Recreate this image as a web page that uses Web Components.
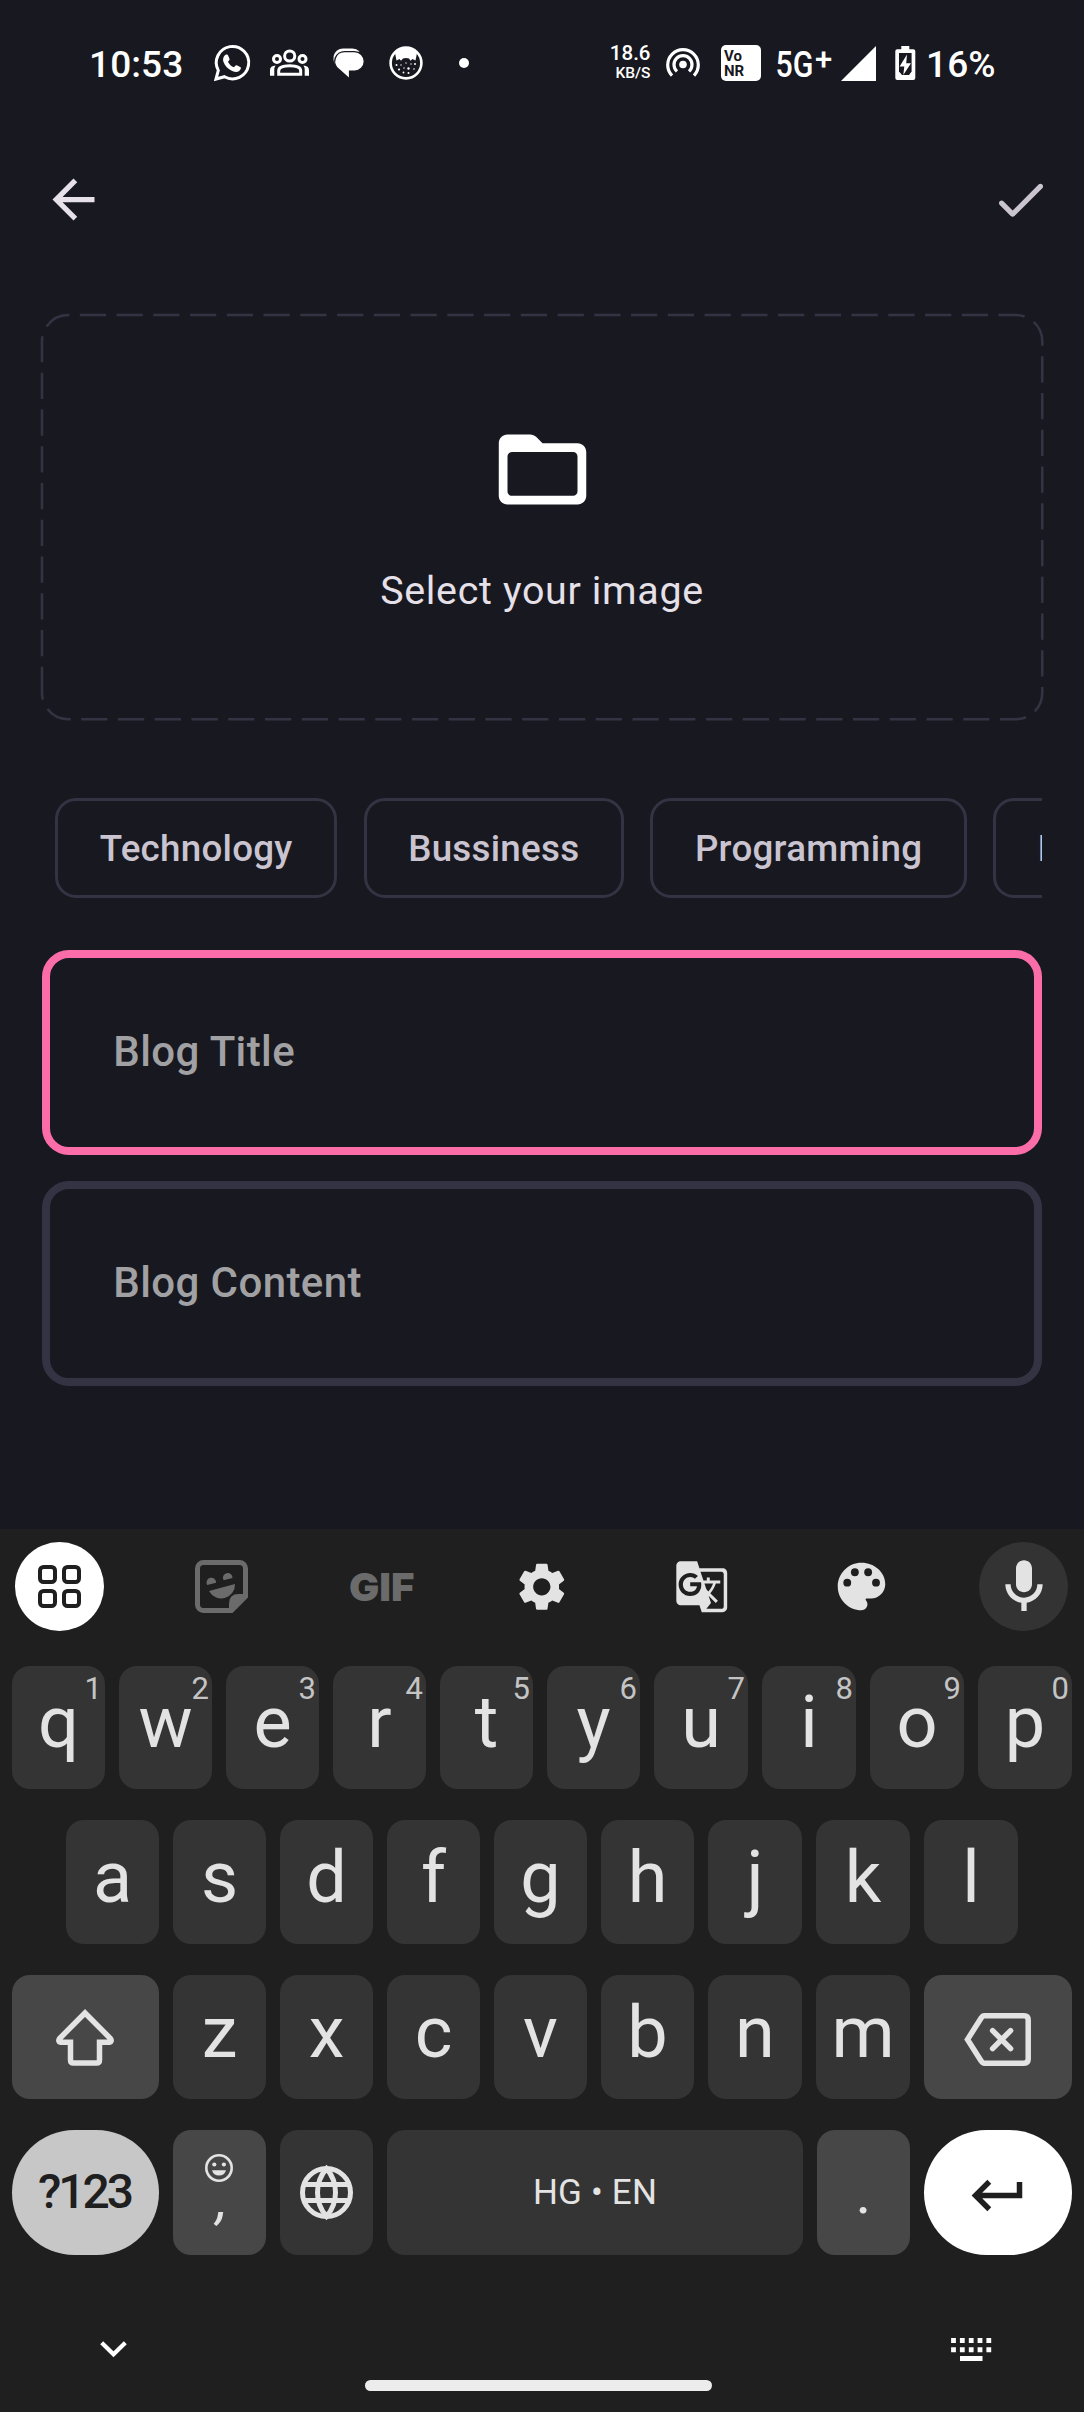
<!DOCTYPE html>
<html lang="en">
<head>
<meta charset="utf-8">
<title>New blog</title>
<style>
html,body{margin:0;padding:0}
body{width:1084px;height:2412px;overflow:hidden;background:#181820;font-family:Roboto,"Noto Sans",sans-serif}
</style>
</head>
<body>
<blog-screen></blog-screen>
<script>
const ICONS = {
  whatsapp:[36,36,'0 0 36 36','<path d="M2 34l2.300-8.600A16.200 16.200 0 1 1 10.500 31.700z" fill="none" stroke="#fff" stroke-width="3" stroke-linejoin="miter"/><path d="M12 9.600c.8-.4 1.700-.2 2 .6l1.500 3.500c.3.700 0 1.300-1.600 3 1.400 2.700 3.400 4.500 6.100 5.600 1.600-2 2-2.300 2.700-2l3.500 1.700c.8.400.8 1.100.5 2-1.700 3.500-4.800 3.600-8.500 1.900-4.300-2-7.300-5.300-8.700-9-1-3 .2-6.100 2.500-7.300z" fill="#fff"/>'],
  people:[39,28,'0 0 39 28','<g fill="none" stroke="#fff" stroke-width="3"><circle cx="19.700" cy="7" r="5.100"/><circle cx="7" cy="10" r="3.500"/><circle cx="32.500" cy="10" r="3.500"/><path d="M8.700 25.200v-3.300c0-3.600 5.500-5.100 11-5.100s11 1.500 11 5.100v3.300z"/></g><path d="M0 26.700v-5.500c0-3 2-4.500 5.500-4.700q-1.200 2-1.200 4v6.200zM39 26.700v-5.500c0-3-2-4.500-5.500-4.700q1.200 2 1.200 4v6.200z" fill="#fff"/>'],
  chat:[31,31,'0 0 31 31','<path d="M1.500 15.500Q-1.500 7 4 2.500 6.500.5 10 .5h9.500q4 0 7 3z" fill="#fff"/><path d="M12 3.600h9.500a9.800 9.800 0 0 1 0 19.600H16.600V31L6 21.500A9.800 9.800 0 0 1 12 3.600z" fill="#fff" stroke="#181820" stroke-width="1.400"/>'],
  cat:[34,34,'0 0 34 34','<circle cx="17" cy="17" r="15.400" fill="none" stroke="#fff" stroke-width="2.600"/><path d="M6 7Q10 1 17 1t11 6l-1.500 7.500-3-1.500-2 1.800-1.500-2.300q-3-.8-6 0L12 14.800 10.500 13l-3 1.500z" fill="#fff"/><g fill="#fff"><circle cx="7.500" cy="19" r="1"/><circle cx="26" cy="18" r="1"/><circle cx="17" cy="17" r=".7"/><circle cx="10" cy="23.500" r="1.100"/><circle cx="19.500" cy="22.500" r="1.200"/><circle cx="25" cy="23" r=".8"/><circle cx="14.500" cy="26.500" r=".9"/><circle cx="12" cy="19" r=".7"/><circle cx="22" cy="18" r=".7"/><circle cx="19.500" cy="27" r="1"/><circle cx="15" cy="22" r=".7"/></g>'],
  dot:[10,10,'0 0 10 10','<circle cx="5" cy="5" r="5" fill="#fff"/>'],
  hotspot:[34,30,'0 0 34 30','<circle cx="17" cy="16.500" r="3.800" fill="#fff"/><g fill="none" stroke="#fff" stroke-width="3.200"><path d="M6 27.600A15.300 15.300 0 1 1 28 27.600"/><path d="M11 23.400A9 9 0 1 1 23 23.400"/></g>'],
  vonr:[40,36,'0 0 40 36','<rect width="40" height="36" rx="5" fill="#fff"/><g fill="#181820" font-family="Roboto,sans-serif" font-weight="700" font-size="15"><text x="3" y="15.500">Vo</text><text x="3" y="30.700">NR</text></g>'],
  fiveg:[57,36,'0 0 57 36','<g fill="#fff" font-family="Roboto,sans-serif" font-weight="500"><text transform="translate(-.5 31.500) scale(.82 1)" font-size="37">5G</text><text x="39" y="24.700" font-size="31">+</text></g>'],
  signal:[35,35,'0 0 35 35','<path d="M35 0v35H0z" fill="#fff"/>'],
  battery:[20.500,34,'0 0 20.500 34','<path d="M6.300 0h8v3.200h4a2 2 0 0 1 2 2V32a2 2 0 0 1-2 2h-16a2 2 0 0 1-2-2V5.200a2 2 0 0 1 2-2h4z" fill="#fff"/><path d="M4 7h12.600v18.500L14 29H7l-3-3.500z" fill="#181820"/><path d="M12 8.500L4.600 20.500h4.700L8.300 29 16 17.300h-4.800z" fill="#fff"/>'],
  back:[63,63,'0 0 24 24','<path fill="#e6e0e9" d="M20 11H7.830l5.590-5.590L12 4l-8 8 8 8 1.410-1.410L7.830 13H20z"/>'],
  done:[63,63,'0 0 24 24','<path fill="#cac4d0" d="M9 16.200l-3.500-3.500c-.39-.39-1.010-.39-1.400 0-.39.390-.39 1.010 0 1.400l4.190 4.190c.39.390 1.020.390 1.410 0L20.300 7.700c.39-.39.390-1.010 0-1.400-.39-.39-1.010-.39-1.400 0z"/>'],
  folder:[105,105,'0 0 24 24','<path fill="#fff" d="M20 6h-8l-1.410-1.410C10.210 4.210 9.700 4 9.170 4H4c-1.100 0-1.990.9-1.990 2L2 18c0 1.100.9 2 2 2h16c1.100 0 2-.9 2-2V8c0-1.100-.9-2-2-2zm-1 12H5c-.55 0-1-.45-1-1V9c0-.55.450-1 1-1h14c.55 0 1 .45 1 1v8c0 .55-.45 1-1 1z"/>'],
  apps:[43,43,'0 0 43 43','<g fill="none" stroke="#1f1f1f" stroke-width="4"><rect x="2" y="2" width="15" height="15" rx="3.500"/><rect x="26" y="2" width="15" height="15" rx="3.500"/><rect x="2" y="26" width="15" height="15" rx="3.500"/><rect x="26" y="26" width="15" height="15" rx="3.500"/></g>'],
  sticker:[53,53,'0 0 53 53','<path d="M8.500 2.500h36a6 6 0 0 1 6 6V36.500L36.500 50.500h-28a6 6 0 0 1-6-6v-36a6 6 0 0 1 6-6z" fill="none" stroke="#6b6b6b" stroke-width="5"/><path d="M34 50v-6.500q0-9.500 9.500-9.500H51v3.500L37 52z" fill="#6b6b6b"/><path d="M12.200 25a4.800 4.800 0 1 1 8.900-2.300zM28.600 20.300a4.800 4.800 0 1 1 8.900-2.300zM14 31l26-7A13.800 13.800 0 0 1 14 31z" fill="#6b6b6b"/>'],
  gif:[64,30,'0 0 64 30','<text x="-1" y="29" font-family="Inter,sans-serif" font-weight="900" font-size="39" textLength="65.500" lengthAdjust="spacingAndGlyphs" fill="#6b6b6b">GIF</text>'],
  gear:[57.600,57.600,'0 0 24 24','<path fill="#e3e3e3" d="M19.140 12.940c.04-.3.060-.61.060-.94 0-.32-.02-.64-.07-.94l2.030-1.580c.18-.14.230-.41.120-.61l-1.920-3.320c-.12-.22-.37-.29-.59-.22l-2.390.96c-.5-.38-1.030-.7-1.620-.94l-.36-2.540c-.04-.24-.24-.41-.48-.41h-3.840c-.24 0-.43.170-.47.410l-.36 2.540c-.59.240-1.130.570-1.620.940l-2.390-.96c-.22-.08-.47 0-.59.220L2.740 8.870c-.12.210-.08.470.12.610l2.030 1.580c-.05.300-.09.630-.09.940s.02.640.07.940l-2.030 1.580c-.18.140-.23.410-.12.610l1.920 3.320c.12.220.370.290.590.220l2.390-.96c.5.380 1.030.7 1.620.94l.36 2.540c.05.240.240.410.480.410h3.840c.24 0 .44-.17.470-.41l.36-2.540c.59-.24 1.130-.56 1.620-.94l2.390.96c.22.080.470 0 .59-.22l1.920-3.320c.12-.22.070-.47-.12-.61zM12 15.600c-1.980 0-3.600-1.620-3.600-3.600s1.620-3.600 3.600-3.600 3.600 1.620 3.600 3.600-1.620 3.600-3.600 3.600z"/>'],
  translate:[55.500,55.500,'0 0 24 24','<path fill="#e3e3e3" d="M21 4H11l-1-3H3c-1.100 0-2 .9-2 2v15c0 1.100.9 2 2 2h8l1 3h9c1.100 0 2-.9 2-2V6c0-1.100-.9-2-2-2zM7 16c-2.760 0-5-2.240-5-5s2.240-5 5-5c1.350 0 2.480.5 3.350 1.300L9.030 8.570c-.38-.36-1.040-.78-2.030-.78-1.740 0-3.150 1.440-3.150 3.210S5.260 14.210 7 14.210c2.010 0 2.840-1.440 2.920-2.410H7v-1.710h4.680c.07.310.12.610.12 1.020C11.800 13.970 9.890 16 7 16zm6.170-5.420h3.700c-.43 1.250-1.110 2.430-2.050 3.470-.31-.35-.6-.72-.86-1.100l-.79-2.370zm8.330 9.920c0 .55-.45 1-1 1H14l2-2.500-1.040-3.100 3.100 3.100.92-.92-3.300-3.250.02-.02c1.130-1.250 1.930-2.690 2.400-4.220H20v-1.300h-4.530V8h-1.290v1.290h-1.440L11.460 5.500h9.040c.55 0 1 .45 1 1v14z"/>'],
  palette:[57,57,'0 0 24 24','<path fill="#e3e3e3" d="M12 2C6.490 2 2 6.490 2 12s4.490 10 10 10c1.380 0 2.500-1.120 2.500-2.500 0-.61-.23-1.200-.64-1.670-.08-.1-.13-.21-.13-.33 0-.28.220-.5.500-.5H16c3.310 0 6-2.690 6-6 0-4.960-4.490-9-10-9z"/><g fill="#1f1f1f"><circle cx="6" cy="10.400" r="1.650"/><circle cx="9.200" cy="6" r="1.650"/><circle cx="14.800" cy="6" r="1.650"/><circle cx="18.100" cy="10.400" r="1.650"/></g>'],
  mic:[64,64,'0 0 24 24','<path fill="#e3e3e3" d="M12 14c1.660 0 3-1.340 3-3V5c0-1.660-1.340-3-3-3S9 3.340 9 5v6c0 1.660 1.340 3 3 3zm5-3c0 2.760-2.240 5-5 5s-5-2.240-5-5H5c0 3.530 2.610 6.430 6 6.920V21h2v-3.080c3.390-.49 6-3.390 6-6.920z"/>'],
  shift:[60,57,'0 0 60 57','<path d="M30 4L4.600 29.500q-2 3 1 3.700H15.500V51q0 3 3 3H41.500q3 0 3-3V33.200H54.400q3-.7 1-3.700z" fill="none" stroke="#e3e3e3" stroke-width="5.500"/>'],
  backspace:[67,53,'0 0 67 53','<path d="M20.500 2.800H60q4.200 0 4.200 4.200v39q0 4.200-4.200 4.200H20.500q-2 0-3.200-2L3.500 26.500 17.300 4.800q1.200-2 3.200-2z" fill="none" stroke="#e3e3e3" stroke-width="5.500"/><path d="M28.600 17.600l18 18m0-18l-18 18" stroke="#e3e3e3" stroke-width="5.500" stroke-linecap="round"/>'],
  smile:[28,28,'0 0 28 28','<circle cx="14" cy="14" r="12.700" fill="none" stroke="#e3e3e3" stroke-width="2.600"/><g fill="#e3e3e3"><circle cx="9.300" cy="10.500" r="2.100"/><circle cx="18.900" cy="10.500" r="2.100"/><path d="M7 16.300h14a7.300 7.300 0 0 1-14 0z"/></g>'],
  globe:[53,53,'0 0 53 53','<g fill="none" stroke="#e3e3e3" stroke-width="5"><circle cx="26.500" cy="26.500" r="24"/><path d="M4 18.500h45M4 34.500h45M26.500 2.500Q17.500 13 17.500 26.500t9 24Q35.500 40 35.500 26.500t-9-24z"/></g>'],
  enter:[51,31,'0 0 51 31','<path d="M47.500 2v13.500H4.500M17.300 1.700L3.500 15.500l13.800 13.800" fill="none" stroke="#1f1f1f" stroke-width="5.500"/>'],
  down:[27,17,'0 0 27 17','<path d="M1.700 1.700l11.800 11.600L25.300 1.700" fill="none" stroke="#fff" stroke-width="4.200"/>'],
  keyboard:[41,23,'0 0 41 23','<path d="M2.500 0v14.500M11.300 0v14.500M20.200 0v14.500M29 0v14.500M37.800 0v14.500" stroke="#fff" stroke-width="4.800" stroke-dasharray="5 4.300"/><path d="M9 20.500h22.500" stroke="#fff" stroke-width="5"/>']
};

function define(name, html, setup){
  const tpl = document.createElement('template');
  tpl.innerHTML = html;
  customElements.define(name, class extends HTMLElement{
    connectedCallback(){
      if(this.shadowRoot) return;
      const root = this.attachShadow({mode:'open'});
      root.append(tpl.content.cloneNode(true));
      if(setup) setup(this, root);
    }
  });
}

define('ui-icon', `<style>:host{display:block;flex:none}svg{display:block;overflow:visible}</style>`, (el, root) => {
  const [w, h, vb, body] = ICONS[el.getAttribute('name')];
  root.innerHTML += `<svg width="${w}" height="${h}" viewBox="${vb}">${body}</svg>`;
});

define('status-bar', `<style>
:host{display:flex;align-items:center;height:126px;box-sizing:border-box;padding-left:89px;color:#fff}
.time{width:95px;font-size:37px;font-weight:500;line-height:44px;padding-top:3px;letter-spacing:.1px;white-space:nowrap}
.speed{width:181.500px;text-align:right;font-weight:500}
.speed div{font-size:20.500px;line-height:20px;margin-top:-2px}
.speed div+div{font-size:15.500px;line-height:17px;margin-top:2px}
.pct{margin-left:11px;font-size:37px;font-weight:500;line-height:44px;padding-top:3px;letter-spacing:.1px}
</style>
<div class="time">10:53</div>
<ui-icon name="whatsapp" style="margin-left:30px"></ui-icon>
<ui-icon name="people" style="margin-left:20px"></ui-icon>
<ui-icon name="chat" style="margin-left:23.500px"></ui-icon>
<ui-icon name="cat" style="margin-left:25.500px"></ui-icon>
<ui-icon name="dot" style="margin-left:36px"></ui-icon>
<div class="speed"><div>18.6</div><div>KB/S</div></div>
<ui-icon name="hotspot" style="margin-left:15.500px"></ui-icon>
<ui-icon name="vonr" style="margin-left:21px"></ui-icon>
<ui-icon name="fiveg" style="margin-left:15px"></ui-icon>
<ui-icon name="signal" style="margin-left:7.500px"></ui-icon>
<ui-icon name="battery" style="margin-left:19px"></ui-icon>
<div class="pct">16%</div>`);

define('app-bar', `<style>:host{display:flex;align-items:center;justify-content:space-between;height:147px;padding:0 32px 0 42px}</style>
<ui-icon name="back"></ui-icon><ui-icon name="done"></ui-icon>`);

define('image-picker', `<style>
:host{display:grid;height:404.300px}
svg,.body{grid-area:1/1}
svg{overflow:visible}
.body{display:flex;flex-direction:column;align-items:center;padding-top:101.500px}
.label{margin-top:41px;font-size:39.400px;line-height:56px;letter-spacing:.66px;color:#e6e0e9}
</style>
<svg width="1000" height="404.300"><path d="M0 378V26.250A26.250 26.250 0 0 1 26.250 0H974A26.250 26.250 0 0 1 1000.250 26.250V378A26.250 26.250 0 0 1 974 404.300H26.250A26.250 26.250 0 0 1 0 378" fill="none" stroke="#343343" stroke-width="2.600" stroke-dasharray="26.250 10.500"/></svg>
<div class="body"><ui-icon name="folder"></ui-icon><div class="label"><slot></slot></div></div>`);

define('topic-chip', `<style>
:host{display:flex;flex:none;align-items:center;height:100px;box-sizing:border-box;border:3px solid #343343;border-radius:21px;padding:1px 41.700px 0;font-size:36.750px;font-weight:500;letter-spacing:.26px;color:#cac4d0;white-space:nowrap}
</style><slot></slot>`);

define('chip-row', `<style>:host{display:flex;gap:26.200px;padding-left:13px;overflow:hidden}</style><slot></slot>`);

define('text-box', `<style>
:host{display:flex;align-items:center;height:205px;box-sizing:border-box;border:8px solid #343343;border-radius:27px;padding:0 63.300px 2px;font-size:42px;font-weight:500;letter-spacing:.4px;color:#a1a1a3}
:host([focused]){border-color:#fb6da9}
</style><slot></slot>`);

define('soft-key', `<style>
:host{position:relative;display:flex;flex:0 0 93px;align-items:center;justify-content:center;box-sizing:border-box;border-radius:18px;background:#343434;color:#e3e3e3;font-size:72px;line-height:84px;padding-bottom:9px}
:host([wide]){flex-basis:94px}
:host([kind=side]){flex:0 0 147px;background:#474747;padding:0 1px 0 0}
:host([kind=side][wide]){flex-basis:148px}
:host([kind=globe]){padding:0}
:host([kind=space]){flex:1;padding:0;font-size:35px;letter-spacing:.2px}
:host([kind=num]){flex:0 0 147px;background:#c7c7c7;border-radius:63px;color:#1f1f1f;font-size:48px;font-weight:500;letter-spacing:-3px;padding:0 2px 1px 0}
:host([kind=enter]){flex:0 0 148px;background:#fff;border-radius:63px;padding:5px 1px 0 0}
:host([kind=comma]){background:#474747;flex-direction:column;justify-content:flex-start;padding:24px 1px 0 0;font-size:56px;line-height:34px}
.comma{font-style:italic;padding-left:5px}
:host([kind=dot]){background:#474747;font-size:60px;padding:0}
.hint{position:absolute;right:3px;top:5px;font-size:31px;line-height:36px;color:#c4c4c4}
::slotted(i){padding-left:6px}
</style><slot></slot><span class="hint"></span>`, (el, root) => {
  const hint = root.querySelector('.hint');
  if(el.hasAttribute('hint')) hint.textContent = el.getAttribute('hint'); else hint.remove();
});

define('key-row', `<style>:host{display:flex;gap:14px;padding:0 12px}</style><slot></slot>`);

define('key-tools', `<style>
:host{display:flex;justify-content:space-between;height:89px;padding:13px 16px 35px 15px}
.round{width:89px;height:89px;border-radius:50%;display:grid;place-items:center}
.on{background:#fff}.mic{background:#333}
.mid{display:grid;grid-template-columns:repeat(5,160px);place-items:center}
</style>
<div class="round on"><ui-icon name="apps"></ui-icon></div>
<div class="mid"><ui-icon name="sticker"></ui-icon><ui-icon name="gif"></ui-icon><ui-icon name="gear"></ui-icon><ui-icon name="translate"></ui-icon><ui-icon name="palette"></ui-icon></div>
<div class="round mic"><ui-icon name="mic"></ui-icon></div>`);

define('nav-strip', `<style>
:host{display:block}
.top{display:flex;justify-content:space-between;align-items:center;height:23px;padding:83px 92px 0 99.500px}
.pill{width:347px;height:11px;border-radius:6px;background:#ececec;margin:19px 0 0 365px}
</style><div class="top"><ui-icon name="down"></ui-icon><ui-icon name="keyboard"></ui-icon></div><div class="pill"></div>`);

define('soft-keyboard', `<style>
:host{display:block;height:883px;background:#1f1f1f}
.r1{height:123px}.r2{height:124px;margin-top:31px;padding:0 66px}.r3{height:124px;margin-top:31px}.r4{height:125px;margin-top:31px}
</style>
<key-tools></key-tools>
<key-row class="r1"></key-row><key-row class="r2"></key-row><key-row class="r3"></key-row>
<key-row class="r4"><soft-key kind="num">?123</soft-key><soft-key kind="comma"><ui-icon name="smile"></ui-icon><i>,</i></soft-key><soft-key kind="globe"><ui-icon name="globe"></ui-icon></soft-key><soft-key kind="space">HG • EN</soft-key><soft-key kind="dot">.</soft-key><soft-key kind="enter"><ui-icon name="enter"></ui-icon></soft-key></key-row>
<nav-strip></nav-strip>`, (el, root) => {
  const keys = (s, wideFrom, hints) => [...s].map((c, i) =>
    `<soft-key${i >= wideFrom ? ' wide' : ''}${hints ? ` hint="${hints[i]}"` : ''}>${c}</soft-key>`).join('');
  root.querySelector('.r1').innerHTML = keys('qwertyuiop', 6, '1234567890');
  root.querySelector('.r2').innerHTML = keys('asdfghjkl', 6);
  root.querySelector('.r3').innerHTML = `<soft-key kind="side"><ui-icon name="shift"></ui-icon></soft-key>${keys('zxcvbnm', 5)}<soft-key kind="side" wide><ui-icon name="backspace" style="margin-top:5px"></ui-icon></soft-key>`;
});

define('blog-screen', `<style>
:host{display:flex;flex-direction:column;height:2412px;background:#181820}
main{flex:1;padding:42px 42px 0;min-height:0}
chip-row{margin-top:78.700px}
.title{margin-top:52px}.content{margin-top:26px}
</style>
<status-bar></status-bar>
<app-bar></app-bar>
<main>
<image-picker>Select your image</image-picker>
<chip-row><topic-chip>Technology</topic-chip><topic-chip>Bussiness</topic-chip><topic-chip>Programming</topic-chip><topic-chip>Entertainment</topic-chip></chip-row>
<text-box class="title" focused>Blog Title</text-box>
<text-box class="content">Blog Content</text-box>
</main>
<soft-keyboard></soft-keyboard>`);
</script>
</body>
</html>
